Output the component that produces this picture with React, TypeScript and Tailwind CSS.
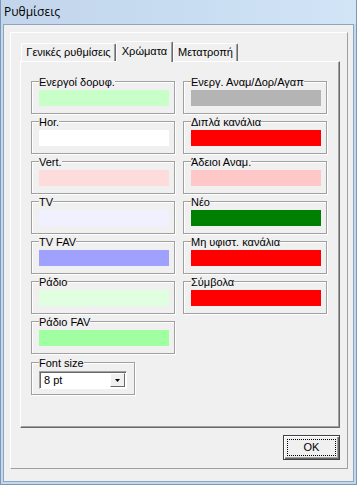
import React from "react";

const font = { fontFamily: '"Liberation Sans", Arial, sans-serif' };

const left = [
  { label: "Ενεργοί δορυφ.", color: "bg-[#c8ffc8]" },
  { label: "Hor.", color: "bg-[#ffffff]" },
  { label: "Vert.", color: "bg-[#ffdcdc]" },
  { label: "TV", color: "bg-[#f0f0ff]" },
  { label: "TV FAV", color: "bg-[#a0a0ff]" },
  { label: "Ράδιο", color: "bg-[#e0ffe0]" },
  { label: "Ράδιο FAV", color: "bg-[#a0ffa0]" },
];

const right = [
  { label: "Ενεργ. Αναμ/Δορ/Αγαπ", color: "bg-[#b4b4b4]" },
  { label: "Διπλά κανάλια", color: "bg-[#ff0000]" },
  { label: "Άδειοι Αναμ.", color: "bg-[#ffc8c8]" },
  { label: "Νέο", color: "bg-[#008000]" },
  { label: "Μη υφιστ. κανάλια", color: "bg-[#ff0000]" },
  { label: "Σύμβολα", color: "bg-[#ff0000]" },
];

// classic etched group box
const GroupBox = ({ label, width, children }: { label: string; width: string; children: React.ReactNode }) => (
  <div
    className={`relative h-[33px] ${width} shrink-0 border border-[#a0a0a0] shadow-[1px_1px_0_#fff,inset_1px_1px_0_#fff]`}
  >
    <span className="absolute left-[7px] top-[-6px] bg-[#f0f0f0] text-[11px] leading-[13px] text-black whitespace-nowrap">
      {label}
    </span>
    {children}
  </div>
);

const Swatch = ({ label, color }: { label: string; color: string }) => (
  <GroupBox label={label} width="w-[144px]">
    <div className={`ml-[7px] mt-[8px] h-[16px] w-[130px] ${color}`} />
  </GroupBox>
);

const Tab = ({ label, w, active }: { label: string; w: string; active?: boolean }) => (
  <div
    className={`${w} flex items-center justify-center rounded-t-[2px] border-l border-t border-l-white border-t-white border-r border-r-[#696969] shadow-[inset_-1px_0_0_#a0a0a0] bg-[#f0f0f0] text-[11px] text-black ${
      active ? "relative z-10 -mb-px h-[21px] pb-[2px]" : "h-[18px]"
    }`}
  >
    {label}
  </div>
);

export default function App() {
  return (
    <div style={font} className="flex h-[485px] w-[357px] flex-col bg-[#c3d8ee] border-x border-b border-[#7d97b6]">
      <div className="flex h-[24px] shrink-0 items-center bg-gradient-to-r from-[#c2d5ea] via-[#c8dcf1] to-[#d2e5f7] pl-[3px]">
        <span style={{ fontFamily: '"Open Sans", "Noto Sans", sans-serif' }} className="text-[12px] text-black">
          Ρυθμίσεις
        </span>
      </div>
      <div className="mx-[2px] mb-[2px] flex-1 border border-[#8ea5bf] bg-[#f0f0f0] pl-[6px] pr-[5px] pt-[7px]">
        <div className="flex flex-col border border-b-[#a0a0a0] border-l-white border-r-[#a0a0a0] border-t-white pl-[9px] pr-[7px] pt-[8px] pb-[8px]">
          <div className="flex h-[20px] items-end pl-px">
            <Tab label="Γενικές ρυθμίσεις" w="w-[95px]" />
            <Tab label="Χρώματα" w="w-[57px]" active />
            <Tab label="Μετατροπή" w="w-[65px]" />
          </div>
          <div className="flex h-[367px] gap-[8px] border border-b-[#696969] border-l-white border-r-[#696969] border-t-white pl-[10px] pt-[19px] shadow-[inset_-1px_-1px_0_#a0a0a0]">
            <div className="flex flex-col gap-[7px]">
              {left.map((s) => (
                <Swatch key={s.label} {...s} />
              ))}
              <div className="mt-px">
                <GroupBox label="Font size" width="w-[104px]">
                  <div className="ml-[7px] mt-[8px] flex h-[18px] w-[88px] border border-b-white border-l-[#a0a0a0] border-r-white border-t-[#a0a0a0] bg-white shadow-[inset_1px_1px_0_#696969]">
                    <span className="flex-1 pl-[4px] pt-[2px] text-[11px] leading-[13px] text-black">8 pt</span>
                    <div className="m-[1px] flex w-[15px] items-center justify-center border border-b-[#696969] border-l-white border-r-[#696969] border-t-white bg-[#f0f0f0]">
                      <svg width="5" height="3" viewBox="0 0 5 3">
                        <path d="M0 0h5L2.5 3z" fill="#000" />
                      </svg>
                    </div>
                  </div>
                </GroupBox>
              </div>
            </div>
            <div className="flex flex-col gap-[7px]">
              {right.map((s) => (
                <Swatch key={s.label} {...s} />
              ))}
            </div>
          </div>
          <div className="mt-[7px] flex justify-end">
            <button className="flex h-[25px] w-[57px] border border-[#404040] bg-[#f0f0f0] p-[3px] shadow-[inset_1px_1px_0_#fff,inset_-1px_-1px_0_#696969,inset_-2px_-2px_0_#a0a0a0]">
              <span className="flex flex-1 items-center justify-center border border-dotted border-black text-[11px] text-black">
                OK
              </span>
            </button>
          </div>
        </div>
      </div>
    </div>
  );
}
